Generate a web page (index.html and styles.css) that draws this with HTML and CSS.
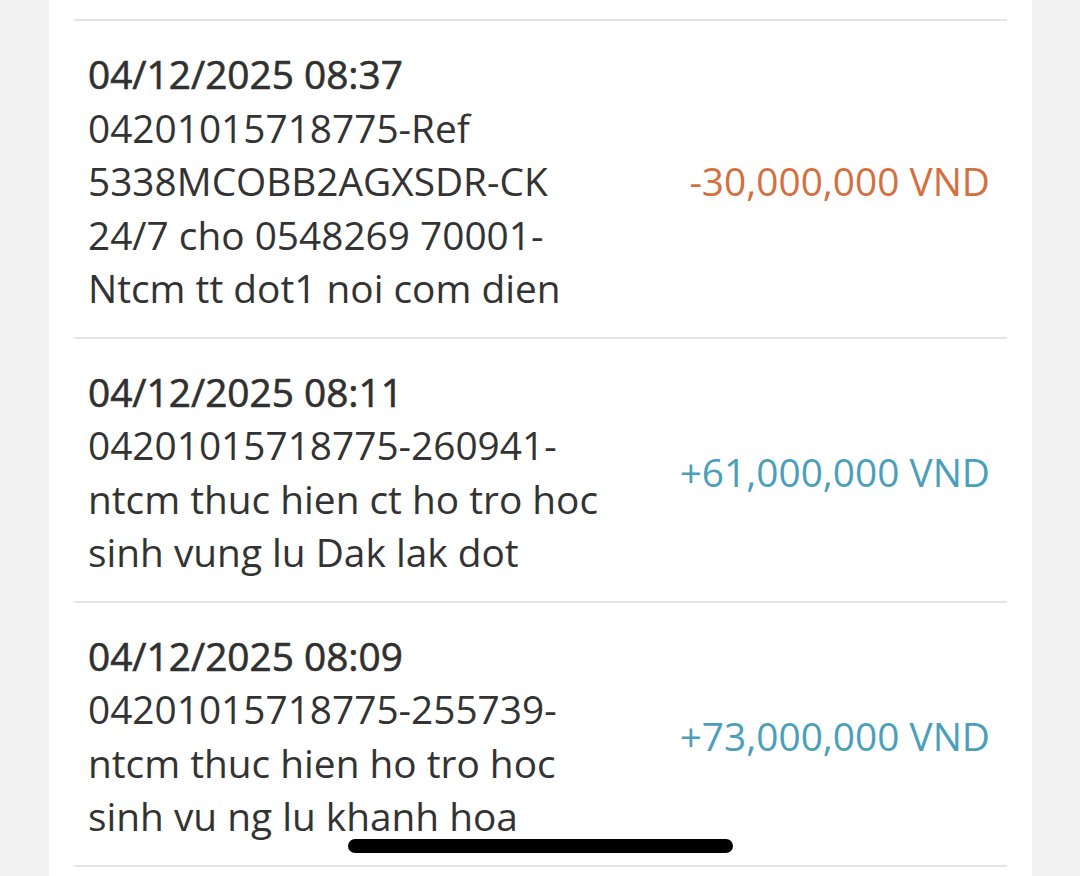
FILE: index.html
```html
<!DOCTYPE html>
<html>
<head>
<meta charset="utf-8">
<link rel="stylesheet" href="styles.css">
</head>
<body>
<div class="page">
  <div class="card">
    <div class="row">
      <div class="desc">
        <div class="date">04/12/2025 08:37</div>
        <div class="memo">04201015718775-Ref<br>5338MCOBB2AGXSDR-CK<br>24/7 cho 0548269 70001-<br>Ntcm tt dot1 noi com dien</div>
      </div>
      <div class="amount neg">-30,000,000 VND</div>
    </div>
    <div class="row">
      <div class="desc">
        <div class="date">04/12/2025 08:11</div>
        <div class="memo">04201015718775-260941-<br>ntcm thuc hien ct ho tro hoc<br>sinh vung lu Dak lak dot</div>
      </div>
      <div class="amount pos">+61,000,000 VND</div>
    </div>
    <div class="row">
      <div class="desc">
        <div class="date">04/12/2025 08:09</div>
        <div class="memo">04201015718775-255739-<br>ntcm thuc hien ho tro hoc<br>sinh vu ng lu khanh hoa</div>
      </div>
      <div class="amount pos">+73,000,000 VND</div>
    </div>
    <div class="row end"></div>
  </div>
</div>
<div class="home-indicator"></div>
</body>
</html>
```

FILE: styles.css
```css
html, body {
  margin: 0;
  padding: 0;
  height: 100%;
  overflow: hidden;
}
body {
  background: #f2f2f2;
  font-family: "Open Sans", "Noto Sans", sans-serif;
  color: #333333;
}
.page {
  display: flex;
  justify-content: center;
  height: 876px;
}
.card {
  width: 983px;
  margin-left: 1px;
  background: #ffffff;
  padding: 19px 25px 0 25px;
  box-sizing: border-box;
}
.row {
  display: flex;
  align-items: center;
  justify-content: space-between;
  border-top: 2px solid #e4e4e6;
  padding: 27px 17px 21px 14px;
}
.row.end {
  padding: 0;
}
.desc {
  font-size: 38.8px;
  line-height: 53.5px;
}
.date {
  font-weight: 400;
  color: #303030;
  -webkit-text-stroke: 0.6px #303030;
}
.memo {
  font-weight: 400;
}
.amount {
  font-size: 38.8px;
  line-height: 53.5px;
  white-space: nowrap;
}
.neg { color: #d4703f; }
.pos { color: #4b9fbb; }
.home-indicator {
  position: fixed;
  left: 348px;
  width: 385px;
  bottom: 23px;
  height: 14px;
  border-radius: 7px;
  background: #000000;
}
```
